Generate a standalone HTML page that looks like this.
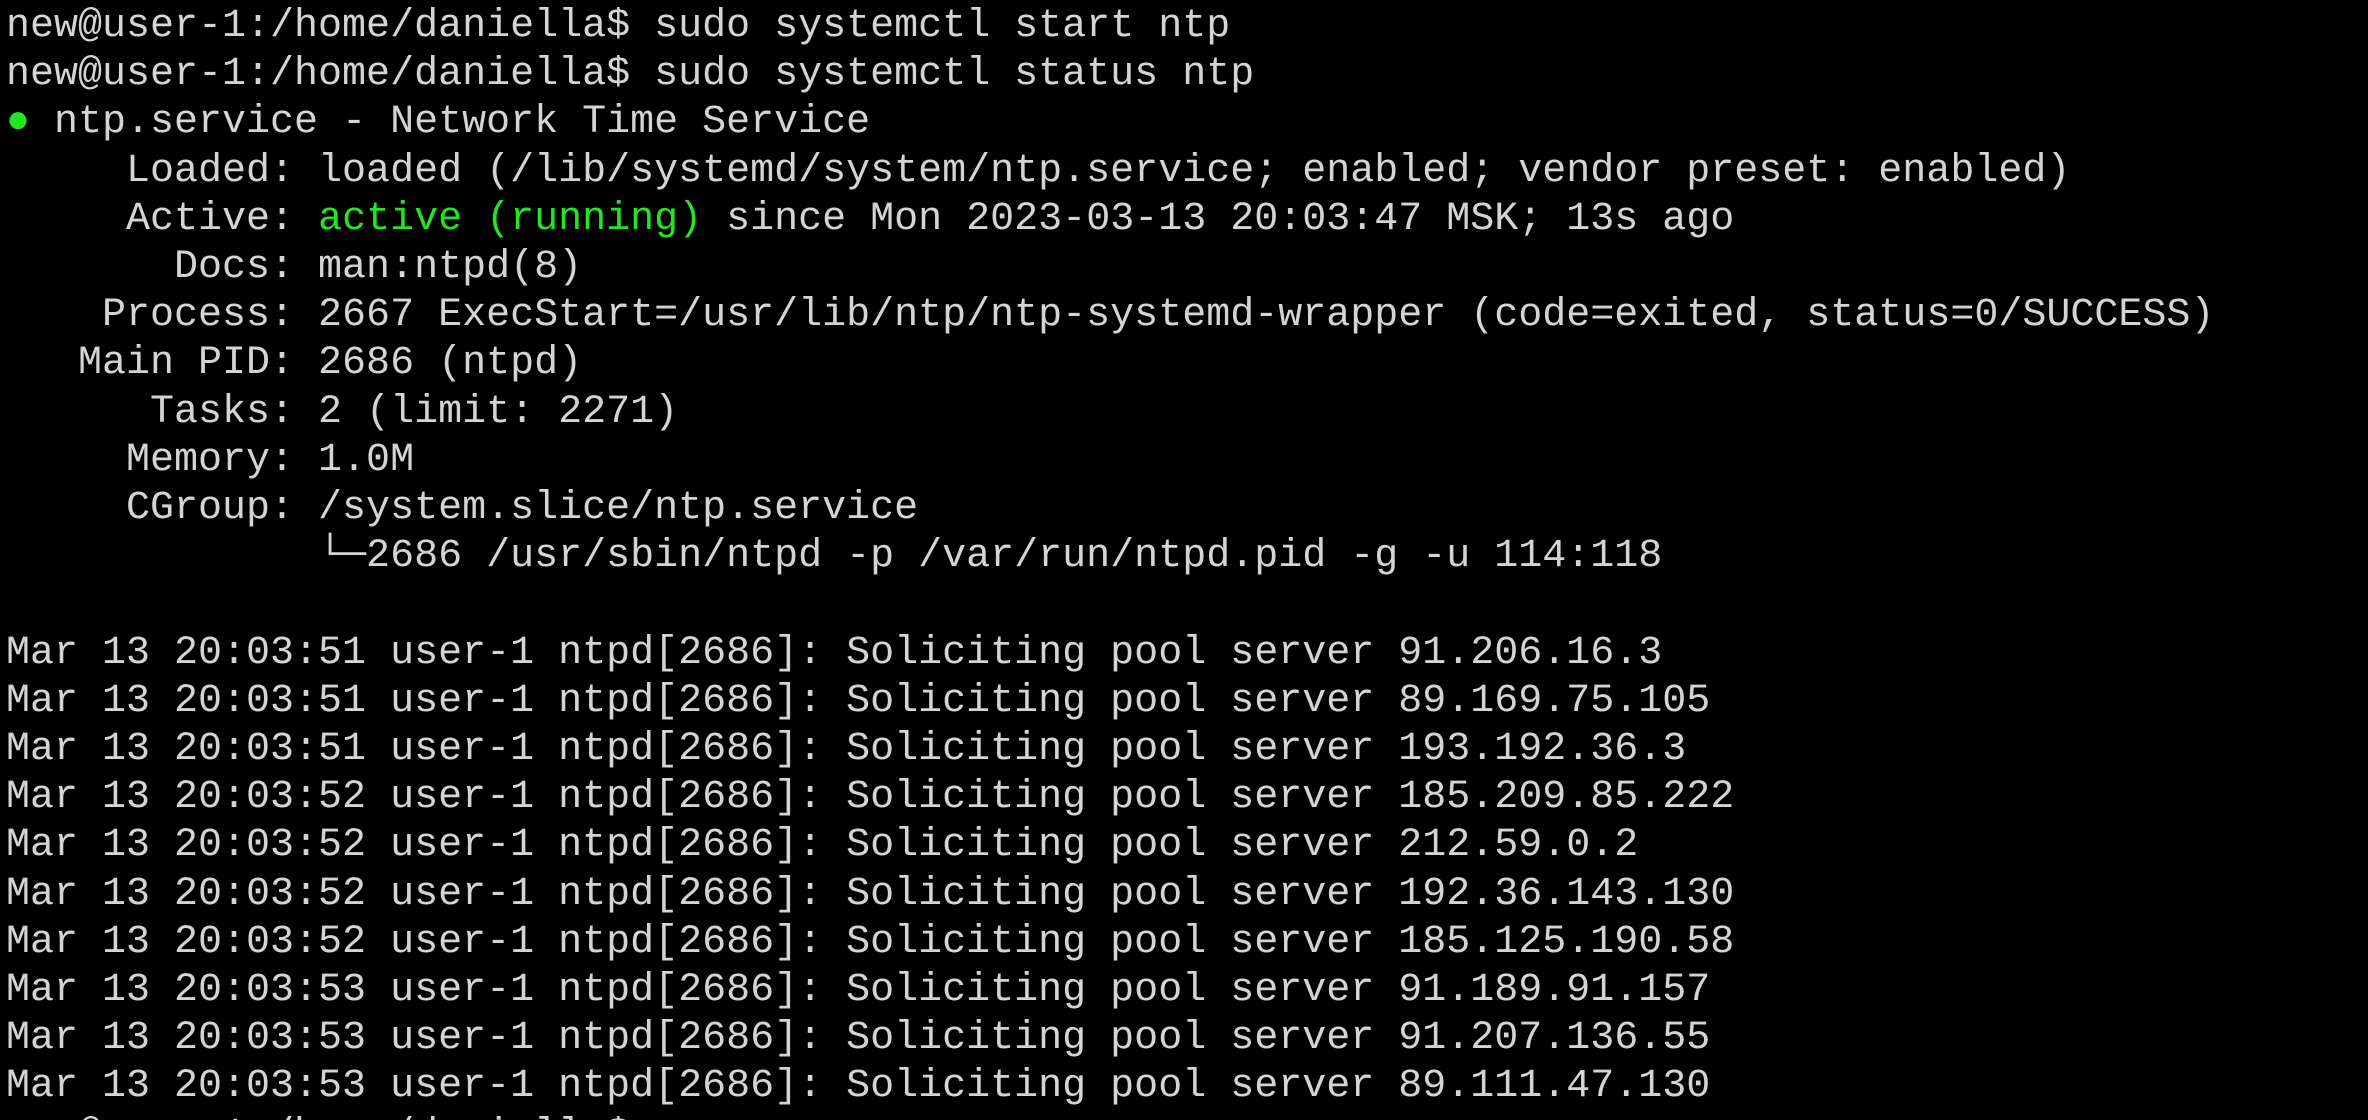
<!DOCTYPE html>
<html><head><meta charset="utf-8"><style>
html,body{margin:0;padding:0;background:#000;width:2368px;height:1120px;overflow:hidden}
#w{position:relative;width:2368px;height:1120px;overflow:hidden;background:#000}
pre{margin:0;position:absolute;left:6px;top:3px;font-family:"Liberation Mono","DejaVu Sans Mono",monospace;font-size:40px;line-height:48.2px;color:#d4d4d4;white-space:pre}
.g{color:#22e622}
</style></head><body><div id="w">
<pre>new@user-1:/home/daniella$ sudo systemctl start ntp
new@user-1:/home/daniella$ sudo systemctl status ntp
<span class="g">●</span> ntp.service - Network Time Service
     Loaded: loaded (/lib/systemd/system/ntp.service; enabled; vendor preset: enabled)
     Active: <span class="g">active (running)</span> since Mon 2023-03-13 20:03:47 MSK; 13s ago
       Docs: man:ntpd(8)
    Process: 2667 ExecStart=/usr/lib/ntp/ntp-systemd-wrapper (code=exited, status=0/SUCCESS)
   Main PID: 2686 (ntpd)
      Tasks: 2 (limit: 2271)
     Memory: 1.0M
     CGroup: /system.slice/ntp.service
             └─2686 /usr/sbin/ntpd -p /var/run/ntpd.pid -g -u 114:118

Mar 13 20:03:51 user-1 ntpd[2686]: Soliciting pool server 91.206.16.3
Mar 13 20:03:51 user-1 ntpd[2686]: Soliciting pool server 89.169.75.105
Mar 13 20:03:51 user-1 ntpd[2686]: Soliciting pool server 193.192.36.3
Mar 13 20:03:52 user-1 ntpd[2686]: Soliciting pool server 185.209.85.222
Mar 13 20:03:52 user-1 ntpd[2686]: Soliciting pool server 212.59.0.2
Mar 13 20:03:52 user-1 ntpd[2686]: Soliciting pool server 192.36.143.130
Mar 13 20:03:52 user-1 ntpd[2686]: Soliciting pool server 185.125.190.58
Mar 13 20:03:53 user-1 ntpd[2686]: Soliciting pool server 91.189.91.157
Mar 13 20:03:53 user-1 ntpd[2686]: Soliciting pool server 91.207.136.55
Mar 13 20:03:53 user-1 ntpd[2686]: Soliciting pool server 89.111.47.130
new@user-1:/home/daniella$</pre>
</div></body></html>
